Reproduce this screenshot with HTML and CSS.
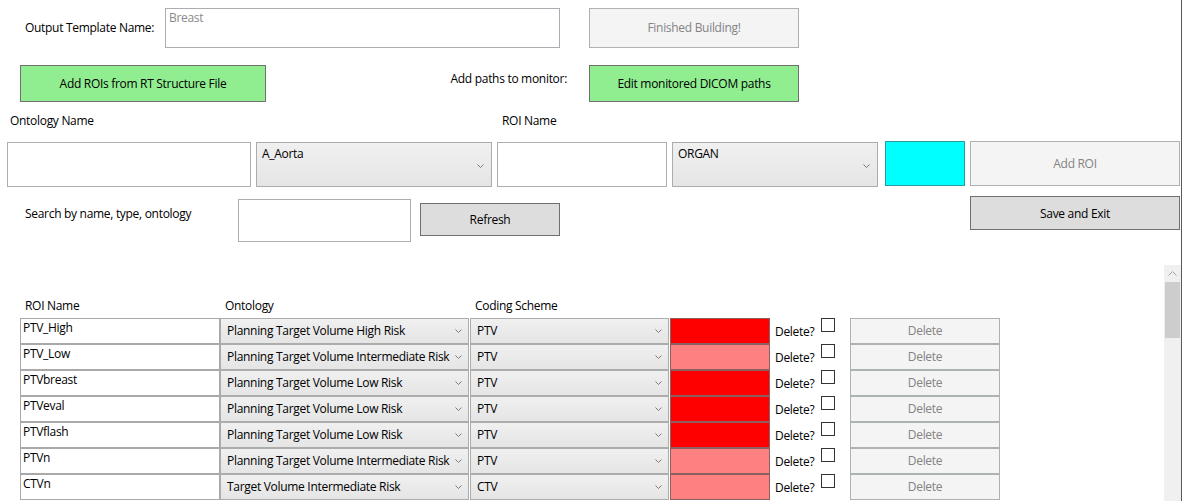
FILE: index.html
```html
<!DOCTYPE html>
<html>
<head>
<meta charset="utf-8">
<link rel="stylesheet" href="styles.css">
</head>
<body>
<div class="window">
  <div class="main">
    <div class="row row1">
      <div class="lbl lbl-template">Output Template Name:</div>
      <div class="textbox tb-template"><span class="placeholder">Breast</span></div>
      <div class="btn btn-disabled btn-finished">Finished Building!</div>
    </div>
    <div class="row row2">
      <div class="btn btn-green btn-addrois">Add ROIs from RT Structure File</div>
      <div class="lbl lbl-paths">Add paths to monitor:</div>
      <div class="btn btn-green btn-dicom">Edit monitored DICOM paths</div>
    </div>
    <div class="row row3">
      <div class="lbl lbl-ontname">Ontology Name</div>
      <div class="lbl lbl-roiname">ROI Name</div>
    </div>
    <div class="row row4">
      <div class="textbox tb-ontname"></div>
      <div class="combo combo-top combo-aorta"><span class="combo-text">A_Aorta</span><svg class="chev" width="7" height="4" viewBox="0 0 7 4"><polyline points="0.5,0.5 3.5,3.5 6.5,0.5" fill="none" stroke="#7a7a7a" stroke-width="1"/></svg></div>
      <div class="textbox tb-roiname"></div>
      <div class="combo combo-top combo-organ"><span class="combo-text">ORGAN</span><svg class="chev" width="7" height="4" viewBox="0 0 7 4"><polyline points="0.5,0.5 3.5,3.5 6.5,0.5" fill="none" stroke="#7a7a7a" stroke-width="1"/></svg></div>
      <div class="swatch-cyan"></div>
      <div class="btn btn-disabled btn-addroi">Add ROI</div>
    </div>
    <div class="row row5">
      <div class="lbl lbl-search">Search by name, type, ontology</div>
      <div class="textbox tb-search"></div>
      <div class="btn btn-gray btn-refresh">Refresh</div>
      <div class="btn btn-gray btn-save">Save and Exit</div>
    </div>
    <div class="table-area">
      <div class="table">
        <div class="thead">
          <div class="th th-name">ROI Name</div>
          <div class="th th-ont">Ontology</div>
          <div class="th th-code">Coding Scheme</div>
        </div>
        <div class="tr">
          <div class="cell-name">PTV_High</div>
          <div class="combo cell-ont"><span class="combo-text">Planning Target Volume High Risk</span><svg class="chev" width="7" height="4" viewBox="0 0 7 4"><polyline points="0.5,0.5 3.5,3.5 6.5,0.5" fill="none" stroke="#7a7a7a" stroke-width="1"/></svg></div>
          <div class="combo cell-code"><span class="combo-text">PTV</span><svg class="chev" width="7" height="4" viewBox="0 0 7 4"><polyline points="0.5,0.5 3.5,3.5 6.5,0.5" fill="none" stroke="#7a7a7a" stroke-width="1"/></svg></div>
          <div class="cell-color red"></div>
          <div class="cell-del"><span class="del-lbl">Delete?</span><span class="checkbox"></span></div>
          <div class="btn btn-disabled cell-btn">Delete</div>
        </div>
        <div class="tr">
          <div class="cell-name">PTV_Low</div>
          <div class="combo cell-ont"><span class="combo-text">Planning Target Volume Intermediate Risk</span><svg class="chev" width="7" height="4" viewBox="0 0 7 4"><polyline points="0.5,0.5 3.5,3.5 6.5,0.5" fill="none" stroke="#7a7a7a" stroke-width="1"/></svg></div>
          <div class="combo cell-code"><span class="combo-text">PTV</span><svg class="chev" width="7" height="4" viewBox="0 0 7 4"><polyline points="0.5,0.5 3.5,3.5 6.5,0.5" fill="none" stroke="#7a7a7a" stroke-width="1"/></svg></div>
          <div class="cell-color pink"></div>
          <div class="cell-del"><span class="del-lbl">Delete?</span><span class="checkbox"></span></div>
          <div class="btn btn-disabled cell-btn">Delete</div>
        </div>
        <div class="tr">
          <div class="cell-name">PTVbreast</div>
          <div class="combo cell-ont"><span class="combo-text">Planning Target Volume Low Risk</span><svg class="chev" width="7" height="4" viewBox="0 0 7 4"><polyline points="0.5,0.5 3.5,3.5 6.5,0.5" fill="none" stroke="#7a7a7a" stroke-width="1"/></svg></div>
          <div class="combo cell-code"><span class="combo-text">PTV</span><svg class="chev" width="7" height="4" viewBox="0 0 7 4"><polyline points="0.5,0.5 3.5,3.5 6.5,0.5" fill="none" stroke="#7a7a7a" stroke-width="1"/></svg></div>
          <div class="cell-color red"></div>
          <div class="cell-del"><span class="del-lbl">Delete?</span><span class="checkbox"></span></div>
          <div class="btn btn-disabled cell-btn">Delete</div>
        </div>
        <div class="tr">
          <div class="cell-name">PTVeval</div>
          <div class="combo cell-ont"><span class="combo-text">Planning Target Volume Low Risk</span><svg class="chev" width="7" height="4" viewBox="0 0 7 4"><polyline points="0.5,0.5 3.5,3.5 6.5,0.5" fill="none" stroke="#7a7a7a" stroke-width="1"/></svg></div>
          <div class="combo cell-code"><span class="combo-text">PTV</span><svg class="chev" width="7" height="4" viewBox="0 0 7 4"><polyline points="0.5,0.5 3.5,3.5 6.5,0.5" fill="none" stroke="#7a7a7a" stroke-width="1"/></svg></div>
          <div class="cell-color red"></div>
          <div class="cell-del"><span class="del-lbl">Delete?</span><span class="checkbox"></span></div>
          <div class="btn btn-disabled cell-btn">Delete</div>
        </div>
        <div class="tr">
          <div class="cell-name">PTVflash</div>
          <div class="combo cell-ont"><span class="combo-text">Planning Target Volume Low Risk</span><svg class="chev" width="7" height="4" viewBox="0 0 7 4"><polyline points="0.5,0.5 3.5,3.5 6.5,0.5" fill="none" stroke="#7a7a7a" stroke-width="1"/></svg></div>
          <div class="combo cell-code"><span class="combo-text">PTV</span><svg class="chev" width="7" height="4" viewBox="0 0 7 4"><polyline points="0.5,0.5 3.5,3.5 6.5,0.5" fill="none" stroke="#7a7a7a" stroke-width="1"/></svg></div>
          <div class="cell-color red"></div>
          <div class="cell-del"><span class="del-lbl">Delete?</span><span class="checkbox"></span></div>
          <div class="btn btn-disabled cell-btn">Delete</div>
        </div>
        <div class="tr">
          <div class="cell-name">PTVn</div>
          <div class="combo cell-ont"><span class="combo-text">Planning Target Volume Intermediate Risk</span><svg class="chev" width="7" height="4" viewBox="0 0 7 4"><polyline points="0.5,0.5 3.5,3.5 6.5,0.5" fill="none" stroke="#7a7a7a" stroke-width="1"/></svg></div>
          <div class="combo cell-code"><span class="combo-text">PTV</span><svg class="chev" width="7" height="4" viewBox="0 0 7 4"><polyline points="0.5,0.5 3.5,3.5 6.5,0.5" fill="none" stroke="#7a7a7a" stroke-width="1"/></svg></div>
          <div class="cell-color pink"></div>
          <div class="cell-del"><span class="del-lbl">Delete?</span><span class="checkbox"></span></div>
          <div class="btn btn-disabled cell-btn">Delete</div>
        </div>
        <div class="tr">
          <div class="cell-name">CTVn</div>
          <div class="combo cell-ont"><span class="combo-text">Target Volume Intermediate Risk</span><svg class="chev" width="7" height="4" viewBox="0 0 7 4"><polyline points="0.5,0.5 3.5,3.5 6.5,0.5" fill="none" stroke="#7a7a7a" stroke-width="1"/></svg></div>
          <div class="combo cell-code"><span class="combo-text">CTV</span><svg class="chev" width="7" height="4" viewBox="0 0 7 4"><polyline points="0.5,0.5 3.5,3.5 6.5,0.5" fill="none" stroke="#7a7a7a" stroke-width="1"/></svg></div>
          <div class="cell-color pink"></div>
          <div class="cell-del"><span class="del-lbl">Delete?</span><span class="checkbox"></span></div>
          <div class="btn btn-disabled cell-btn">Delete</div>
        </div>
      </div>
      <div class="scrollbar">
        <div class="sb-arrow"><svg width="9" height="5" viewBox="0 0 9 5"><polyline points="0.5,4.5 4.5,0.5 8.5,4.5" fill="none" stroke="#a6a6a6" stroke-width="1"/></svg></div>
        <div class="sb-thumb"></div>
      </div>
    </div>
  </div>
</div>
</body>
</html>
```
FILE: styles.css
```css
* { box-sizing: border-box; }
html, body { margin: 0; padding: 0; background: #ffffff; }
body {
  font-family: "Open Sans", "Noto Sans", "Liberation Sans", sans-serif;
  font-size: 12px;
  line-height: 16px;
  letter-spacing: -0.3px;
  color: #000;
  width: 1182px;
  height: 501px;
  overflow: hidden;
}
.window {
  width: 1182px;
  height: 501px;
  border-right: 1px solid #5a5a5a;
  overflow: hidden;
}
.main { width: 1181px; }
.row { display: flex; align-items: flex-start; }
.lbl { white-space: nowrap; }

.textbox {
  background: #fff;
  border: 1px solid #abadb3;
}
.btn {
  display: flex;
  align-items: center;
  justify-content: center;
  white-space: nowrap;
}
.btn-disabled { background: #f4f4f4; border: 1px solid #adb2b5; color: #838383; }
.btn-green { background: #90ee90; border: 1px solid #707070; color: #000; }
.btn-gray { background: #dddddd; border: 1px solid #707070; color: #000; }

.combo {
  display: flex;
  justify-content: space-between;
  background: linear-gradient(#f0f0f0, #e5e5e5);
  border: 1px solid #acacac;
  white-space: nowrap;
}
.combo .chev { flex: none; }

/* row 1 */
.row1 { margin-top: 8px; height: 40px; }
.lbl-template { margin-left: 25px; width: 140px; margin-top: 12px; }
.tb-template { width: 395px; height: 40px; padding: 1px 0 0 3px; }
.placeholder { color: #8a8a8a; }
.btn-finished { margin-left: 29px; width: 210px; height: 40px; }

/* row 2 */
.row2 { margin-top: 17px; height: 37px; }
.btn-addrois { margin-left: 20px; width: 246px; height: 37px; }
.lbl-paths { width: 323px; text-align: right; padding-right: 22px; margin-top: 6px; }
.btn-dicom { width: 210px; height: 37px; }

/* row 3 */
.row3 { height: 39px; }
.lbl-ontname { margin-left: 10px; margin-top: 11px; width: 492px; }
.lbl-roiname { margin-top: 11px; }

/* row 4 */
.row4 { height: 46px; }
.tb-ontname { margin-left: 7px; margin-top: 1px; width: 244px; height: 45px; }
.combo-top { margin-top: 1px; height: 45px; padding: 3px 7px 0 5px; }
.combo-top .chev { margin-top: 18px; }
.combo-aorta { margin-left: 5px; width: 236px; }
.tb-roiname { margin-left: 5px; margin-top: 1px; width: 170px; height: 45px; }
.combo-organ { margin-left: 5px; width: 206px; }
.swatch-cyan { margin-left: 7px; width: 80px; height: 45px; background: #00ffff; border: 1px solid #2a9a9a; }
.btn-addroi { margin-left: 5px; width: 210px; height: 45px; }

/* row 5 */
.row5 { margin-top: 9px; height: 46px; }
.lbl-search { margin-left: 25px; margin-top: 10px; width: 213px; }
.tb-search { margin-top: 3px; width: 173px; height: 43px; }
.btn-refresh { margin-left: 9px; margin-top: 7px; width: 140px; height: 33px; }
.btn-save { margin-left: 410px; width: 210px; height: 34px; padding-top: 2px; }

/* table */
.table-area { display: flex; margin-top: 23px; height: 236px; }
.table { width: 1164px; padding-left: 20px; }
.thead { display: flex; margin-top: 33px; height: 20px; }
.th { padding-left: 5px; }
.th-name { width: 200px; }
.th-ont { width: 250px; }
.th-code { width: 200px; }

.tr { display: flex; height: 26px; }
.cell-name {
  width: 200px; height: 26px;
  border: 1px solid #a9a9a9;
  background: #fff;
  padding: 1px 0 0 2px;
}
.cell-ont { width: 249px; height: 26px; padding: 4px 6px 0 6px; }
.cell-code { margin-left: 1px; width: 199px; height: 26px; padding: 4px 6px 0 6px; }
.tr .chev { margin-top: 6px; }
.cell-color { margin-left: 1px; width: 100px; height: 26px; border: 1px solid #8a6060; }
.cell-color.red { background: #ff0000; }
.cell-color.pink { background: #ff8080; }
.cell-del { display: flex; width: 80px; padding-left: 5px; }
.del-lbl { margin-top: 6px; width: 46px; }
.checkbox { width: 14px; height: 14px; border: 1px solid #333; background: #fff; margin-top: 0; }
.cell-btn { width: 150px; height: 26px; }

.scrollbar { width: 17px; height: 236px; background: #f0f0f0; }
.sb-arrow { height: 17px; display: flex; align-items: center; justify-content: center; }
.sb-thumb { margin-left: 1px; width: 15px; height: 56px; background: #cdcdcd; }
```
